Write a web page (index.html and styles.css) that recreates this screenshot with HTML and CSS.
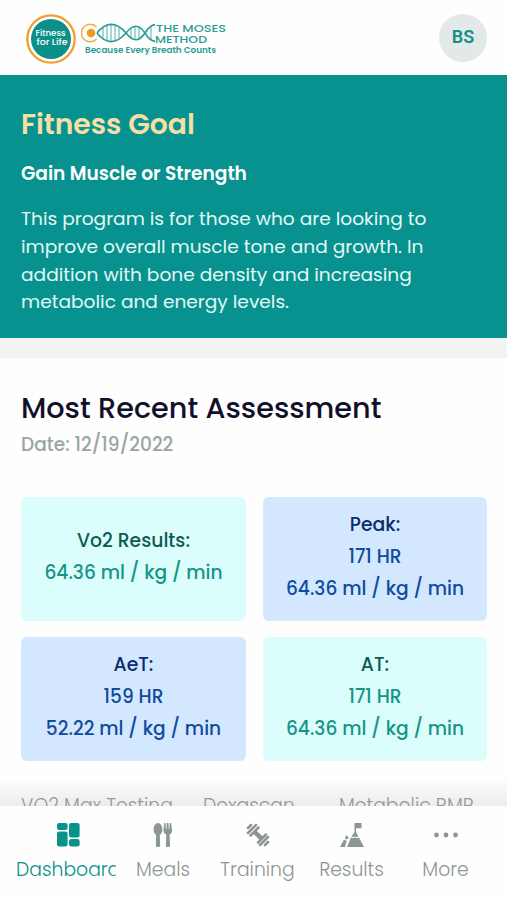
FILE: index.html
```html
<!DOCTYPE html>
<html lang="en">
<head>
    <meta charset="UTF-8">
    <meta name="viewport" content="width=device-width, initial-scale=1.0">
    <title>Dashboard</title>
    <link rel="stylesheet" href="styles.css">
</head>
<body>
    <div class="app">
        <header class="header">
            <div class="logos">
                <svg class="logo-fitness" viewBox="0 0 50 50">
                    <circle cx="25" cy="25" r="23.700" fill="#fff" stroke="#f0a02c" stroke-width="2.300"/>
                    <circle cx="25" cy="25" r="20" fill="#0b8f89"/>
                    <text x="24.600" y="21.800" textLength="30" lengthAdjust="spacingAndGlyphs">Fitness</text>
                    <text x="26" y="30.800" textLength="31" lengthAdjust="spacingAndGlyphs">for Life</text>
                </svg>
                <svg class="logo-moses" viewBox="0 0 148 34">
                    <path d="M15.600 5A8.800 8.800 0 1 0 15.600 17" fill="none" stroke="#f3a83c" stroke-width="1.400"/>
                    <circle cx="10" cy="11" r="4.300" fill="#f29a1f"/>
                    <g fill="none" stroke="#2b9c97" stroke-width="1.600">
                        <path d="M16 11C25-.5 35-.5 45 11C52 20 58 20 64 11C67 6 70 3 74 2.600"/>
                        <path d="M16 11C25 22.500 35 22.500 45 11C52 2 58 2 64 11C67 16 70 19 74 19.400"/>
                        <path d="M22 6v10M26 3v16M30 3v16M34 3.500v15M38 6v10M50 6v10M54 4.500v13M58 5v12M70 5v12" stroke-width=".8"/>
                    </g>
                    <text class="moses-name" x="75" y="10.200" textLength="70" lengthAdjust="spacingAndGlyphs">THE MOSES</text>
                    <text class="moses-name" x="74" y="21" textLength="52" lengthAdjust="spacingAndGlyphs">METHOD</text>
                    <text class="moses-tag" x="4" y="30.500" textLength="131" lengthAdjust="spacingAndGlyphs">Because Every Breath Counts</text>
                </svg>
            </div>
            <div class="avatar">BS</div>
        </header>

        <section class="goal">
            <h1 class="goal-title">Fitness Goal</h1>
            <h2 class="goal-name">Gain Muscle or Strength</h2>
            <p class="goal-text">This program is for those who are looking to improve overall muscle tone and growth. In addition with bone density and increasing metabolic and energy levels.</p>
        </section>

        <section class="assessment">
            <h1 class="assessment-title">Most Recent Assessment</h1>
            <p class="assessment-date">Date: 12/19/2022</p>
            <div class="cards">
                <div class="card green">
                    <h3>Vo2 Results:</h3>
                    <p>64.36 ml / kg / min</p>
                </div>
                <div class="card blue">
                    <h3>Peak:</h3>
                    <p>171 HR</p>
                    <p>64.36 ml / kg / min</p>
                </div>
                <div class="card blue">
                    <h3>AeT:</h3>
                    <p>159 HR</p>
                    <p>52.22 ml / kg / min</p>
                </div>
                <div class="card green">
                    <h3>AT:</h3>
                    <p>171 HR</p>
                    <p>64.36 ml / kg / min</p>
                </div>
            </div>
            <div class="tabs">
                <span>VO2 Max Testing</span>
                <span>Dexascan</span>
                <span>Metabolic RMR</span>
            </div>
        </section>

        <nav class="navbar">
            <a class="nav-item active">
                <svg viewBox="0 0 24 24"><rect x="1" y="0" width="10.600" height="7" rx="2.200"/><rect x="1" y="8.400" width="10.600" height="15" rx="2.200"/><rect x="13" y="0" width="10.600" height="14.400" rx="2.200"/><rect x="13" y="16" width="10.600" height="7.400" rx="2.200"/></svg>
                <span>Dashboard</span>
            </a>
            <a class="nav-item">
                <svg viewBox="0 0 24 24"><path d="M7 0c2.600 0 4.400 3.200 4.400 6.500 0 3-1.300 4.800-2.600 5.500l.4 10.500c0 2.200-4.400 2.200-4.400 0L5.200 12C3.900 11.300 2.600 9.500 2.600 6.500 2.600 3.200 4.400 0 7 0z"/><path d="M13.200 0h1.300l.4 6h.6l.3-6h1.700l.3 6h.6l.4-6h1.300l1 7.500c0 2.300-1.200 3.500-2.500 4l.5 11c0 2.200-4.300 2.200-4.300 0l.5-11c-1.300-.5-2.800-1.700-2.800-4z"/></svg>
                <span>Meals</span>
            </a>
            <a class="nav-item">
                <svg viewBox="0 0 24 24"><path d="M8.500 9l7 6.500" stroke="currentColor" stroke-width="4.500"/><path d="M2 5l3-3M2 10l8-8M4.500 12.500l8-8M12 19.500l8-8M14 22l8-8M19 22l3-3" stroke="currentColor" stroke-width="2.500" stroke-linecap="round"/></svg>
                <span>Training</span>
            </a>
            <a class="nav-item">
                <svg viewBox="0 0 24 24"><path d="M14.500 0H21.500v5.200h-5.500V9l2.300 4.200-1.800 1-1.600-1-1.600 1-1.700-1L14.500 9zM11 14.500l2 .8 1.900-1.100 1.800 1.100 2.300-.8L24 24H7zM6.600 12l2 2.800-1.600 1.700-2.200-1.200zM4 16.500l2.800 1.400L4.900 24H0z"/></svg>
                <span>Results</span>
            </a>
            <a class="nav-item">
                <svg viewBox="0 0 24 24"><circle cx="2.500" cy="12" r="2.400"/><circle cx="12" cy="12" r="2.400"/><circle cx="21.500" cy="12" r="2.400"/></svg>
                <span>More</span>
            </a>
        </nav>
    </div>
</body>
</html>
```
FILE: styles.css
```css
* {
    margin: 0;
    padding: 0;
    box-sizing: border-box;
}

body {
    background-color: #fefefe;
    font-family: Poppins, Inter, "Open Sans", sans-serif;
    font-size: 18.6px;
    overflow: hidden;
}

.app {
    height: 900px;
    display: flex;
    flex-direction: column;
    overflow: hidden;
}

.header {
    height: 75px;
    flex: none;
    display: flex;
    align-items: center;
    justify-content: space-between;
    padding: 0 20px 0 26px;
    background-color: #fefefe;
}

.logos {
    display: flex;
    align-items: center;
    gap: 5px;
    padding-top: 2px;
}

.logo-fitness {
    width: 50px;
    height: 50px;
    fill: #fff;
    font-size: 8.5px;
    font-weight: 500;
    text-anchor: middle;
}

.logo-moses {
    width: 148px;
    height: 34px;
    fill: #2b9c97;
}

.moses-name {
    font-size: 10.8px;
    font-weight: 500;
}

.moses-tag {
    font-size: 8.3px;
    font-weight: 600;
}

.avatar {
    width: 48px;
    height: 48px;
    border-radius: 50%;
    background-color: #e3e8e8;
    color: #159088;
    font-family: Roboto, sans-serif;
    font-size: 18px;
    font-weight: 600;
    line-height: 46px;
    text-align: center;
}

.goal {
    height: 263px;
    flex: none;
    padding: 29px 60px 0 21px;
    background-color: #08928f;
    color: #fff;
}

.goal-title {
    color: #f6dfa6;
    font-size: 28.2px;
    font-weight: 600;
    line-height: 40px;
}

.goal-name {
    margin-top: 16px;
    font-size: 18.6px;
    font-weight: 600;
    line-height: 28px;
}

.goal-text {
    margin-top: 17px;
    color: #e2f8f6;
    line-height: 27.8px;
}

.assessment {
    flex: 1;
    min-height: 0;
    padding: 29px 20px 0 21px;
    border-top: 20px solid #f3f3f3;
    overflow: hidden;
}

.assessment-title {
    color: #11102b;
    font-size: 28.7px;
    font-weight: 500;
    line-height: 42px;
}

.assessment-date {
    margin-top: 2px;
    color: #9aa6a2;
    font-weight: 500;
    line-height: 27px;
}

.cards {
    margin-top: 39px;
    display: grid;
    grid-template-columns: 225px 224px;
    grid-template-rows: 124px 124px;
    gap: 16px 17px;
}

.card {
    border-radius: 6px;
    display: flex;
    flex-direction: column;
    align-items: center;
    justify-content: center;
    padding-bottom: 4px;
    font-size: 18.6px;
    font-weight: 500;
    line-height: 31.8px;
    white-space: nowrap;
}

.card h3 {
    font-size: 18.8px;
    font-weight: 500;
}

.green {
    background-color: #dbfdfc;
    color: #159587;
}

.green h3 {
    color: #0b5c50;
}

.blue {
    background-color: #d3e7ff;
    color: #114c9c;
}

.blue h3 {
    color: #0b2c6b;
}

.tabs {
    margin: 17px -20px 0 -21px;
    padding: 14px 0 0 21px;
    display: grid;
    grid-template-columns: 182px 136px auto;
    background: linear-gradient(#fefefe, #ececec 28px);
    color: #929b98;
    font-size: 18.8px;
    font-weight: 300;
    line-height: 27px;
}

.navbar {
    height: 94px;
    flex: none;
    display: grid;
    grid-template-columns: 100px 94px 95px 93px 95px;
    padding: 17px 14px 0 16px;
    background-color: #fefefe;
    color: #8c9693;
}

.nav-item {
    display: flex;
    flex-direction: column;
    align-items: center;
    overflow: hidden;
    font-size: 18.8px;
    font-weight: 300;
    line-height: 27px;
}

.nav-item svg {
    width: 24px;
    height: 24px;
    flex: none;
    margin-bottom: 9px;
    fill: currentColor;
}

.active {
    color: #08928c;
    align-items: flex-start;
}

.active svg {
    margin-left: 40px;
}
```
